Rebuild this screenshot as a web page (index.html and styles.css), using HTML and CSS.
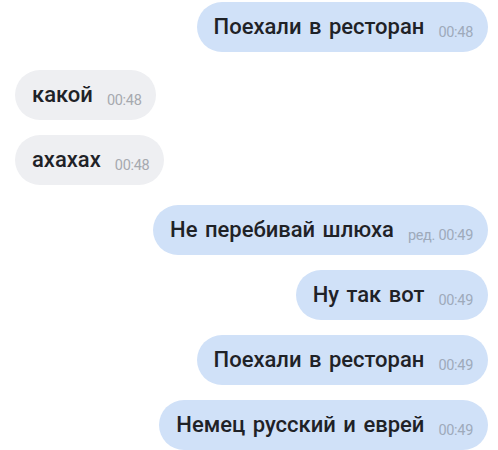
FILE: index.html
```html
<!DOCTYPE html>
<html lang="ru">
<head>
<meta charset="utf-8">
<link rel="stylesheet" href="styles.css">
</head>
<body>
<div class="chat">
  <div class="row out first"><div class="bubble"><span class="text">Поехали в ресторан</span><span class="time">00:48</span></div></div>
  <div class="row in switch"><div class="bubble"><span class="text">какой</span><span class="time">00:48</span></div></div>
  <div class="row in"><div class="bubble"><span class="text">ахахах</span><span class="time">00:48</span></div></div>
  <div class="row out switch2"><div class="bubble"><span class="text">Не перебивай шлюха</span><span class="time">ред. 00:49</span></div></div>
  <div class="row out"><div class="bubble"><span class="text">Ну так вот</span><span class="time">00:49</span></div></div>
  <div class="row out"><div class="bubble"><span class="text">Поехали в ресторан</span><span class="time">00:49</span></div></div>
  <div class="row out"><div class="bubble"><span class="text">Немец русский и еврей</span><span class="time">00:49</span></div></div>
</div>
</body>
</html>
```
FILE: styles.css
```css
html, body {
  margin: 0;
  padding: 0;
  background: #ffffff;
}
body {
  font-family: Roboto, "Noto Sans", sans-serif;
  width: 498px;
  height: 450px;
  overflow: hidden;
}
.chat {
  display: flex;
  flex-direction: column;
  gap: 15px;
  padding: 2px 10px 0 15px;
}
.row {
  display: flex;
}
.row.out {
  justify-content: flex-end;
}
.row.in {
  justify-content: flex-start;
}
.row.switch {
  margin-top: 3px;
}
.row.switch2 {
  margin-top: 5px;
}
.bubble {
  height: 50px;
  box-sizing: border-box;
  display: flex;
  align-items: center;
  border-radius: 25px;
  padding: 0 15px 0 17px;
}
.out .bubble {
  background: #d0e1f8;
}
.in .bubble {
  background: #eeeff2;
}
.text {
  font-size: 22px;
  font-weight: 500;
  line-height: 26px;
  color: #1f2227;
  word-spacing: 2px;
}
.time {
  font-size: 14.5px;
  line-height: 16px;
  color: #9eaabb;
  padding-top: 11px;
  margin-left: 14px;
  letter-spacing: -0.3px;
}
.in .time {
  color: #a6a9af;
}
```
